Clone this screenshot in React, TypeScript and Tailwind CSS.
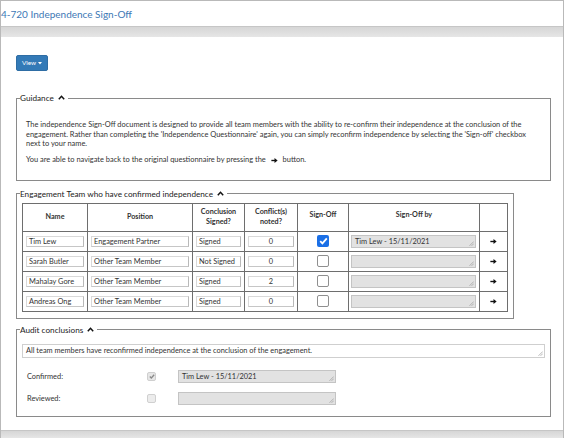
import React from 'react';

type Member = {
  name: string;
  position: string;
  signed: string;
  conflicts: string;
  signedOff: boolean;
  signOffBy: string;
};

const members: Member[] = [
  { name: 'Tim Lew', position: 'Engagement Partner', signed: 'Signed', conflicts: '0', signedOff: true, signOffBy: 'Tim Lew - 15/11/2021' },
  { name: 'Sarah Butler', position: 'Other Team Member', signed: 'Not Signed', conflicts: '0', signedOff: false, signOffBy: '' },
  { name: 'Mahalay Gore', position: 'Other Team Member', signed: 'Signed', conflicts: '2', signedOff: false, signOffBy: '' },
  { name: 'Andreas Ong', position: 'Other Team Member', signed: 'Signed', conflicts: '0', signedOff: false, signOffBy: '' },
];

const ChevronUp = () => (
  <svg width="7" height="5" viewBox="0 0 7 5" className="inline-block ml-[4px] align-[1px]">
    <polyline points="0.8,4.2 3.5,1.3 6.2,4.2" fill="none" stroke="#111" strokeWidth="1.5" />
  </svg>
);

const ArrowRight = () => (
  <svg width="7" height="5" viewBox="0 0 10 8" className="inline-block">
    <rect x="0" y="2.9" width="6" height="2.2" fill="#111" />
    <polygon points="5,0 10,4 5,8" fill="#111" />
  </svg>
);

// little resize grip drawn in the bottom-right corner of the textarea-like fields
const Grip = () => (
  <svg width="5" height="5" viewBox="0 0 5 5" className="absolute right-[1px] bottom-[1px]">
    <line x1="0.5" y1="4.8" x2="4.8" y2="0.5" stroke="#9a9a9a" strokeWidth="0.7" />
    <line x1="2.6" y1="4.8" x2="4.8" y2="2.6" stroke="#9a9a9a" strokeWidth="0.7" />
  </svg>
);

const Field: React.FC<{ value?: string; className?: string; grey?: boolean }> = ({ value, className = '', grey }) => (
  <div
    className={`relative flex items-center pl-[3px] text-[7.4px] text-[#333] border ${
      grey ? 'bg-[#e2e2e2] border-[#c4c4c4]' : 'bg-white border-[#cfcfcf]'
    } ${className}`}
  >
    {value}
    <Grip />
  </div>
);

const Cell: React.FC<{ value: string; center?: boolean }> = ({ value, center }) => (
  <div
    className={`h-[11px] mx-[3px] flex items-center px-[2px] bg-white border border-[#d9d9d9] border-r-[#b9b9b9] border-b-[#c6c6c6] text-[7.4px] text-[#333] whitespace-nowrap overflow-hidden ${
      center ? 'justify-center' : ''
    }`}
  >
    {value}
  </div>
);

const Check: React.FC<{ checked: boolean }> = ({ checked }) =>
  checked ? (
    <span className="w-[12px] h-[12px] rounded-[2px] bg-[#1a6fe6] flex items-center justify-center">
      <svg width="9" height="8" viewBox="0 0 9 8">
        <polyline points="1.2,4.2 3.4,6.4 7.8,1.3" fill="none" stroke="#fff" strokeWidth="1.8" />
      </svg>
    </span>
  ) : (
    <span className="w-[12px] h-[12px] rounded-[2px] bg-white border border-[#8f8f8f]" />
  );

const Legend: React.FC<{ children: React.ReactNode }> = ({ children }) => (
  <legend className="ml-[3px] pr-[3px] text-[8.2px] leading-[10px] text-[#222]">
    {children}
    <ChevronUp />
  </legend>
);

const App: React.FC = () => {
  return (
    <div className="w-[565px] h-[438px] bg-white overflow-hidden font-['Lato',sans-serif]">
      <div className="w-[564px] h-full flex flex-col border-l border-r border-t border-[#b9b9b9]">
        {/* Title */}
        <div className="h-[25px] flex items-center">
          <h1 className="text-[10px] text-[#3d78b5] leading-none">4-720 Independence Sign-Off</h1>
        </div>
        <div className="h-[11px] border-t border-[#c6c6c6] bg-gradient-to-b from-[#d6d6d6] to-[#e6e6e6]" />

        {/* Body */}
        <div className="flex-1 pl-[15px] pt-[18px]">
          <button className="w-[32px] h-[16px] rounded-[2px] bg-[#337ab7] border border-[#2e6da4] text-white text-[6.4px] flex items-center justify-center gap-[2px]">
            View
            <svg width="4" height="3" viewBox="0 0 4 3">
              <polygon points="0,0 4,0 2,2.5" fill="#fff" />
            </svg>
          </button>

          {/* Guidance */}
          <fieldset className="mt-[22px] w-[535px] border border-[#8a8a8a]">
            <Legend>Guidance</Legend>
            <div className="px-[9px] pt-[17px] pb-[15px] text-[7.45px] leading-[9.7px] text-[#333]">
              <p className="mb-[6px]">
                The independence Sign-Off document is designed to provide all team members with the ability to re-confirm their independence at the conclusion of the engagement. Rather than completing the 'Independence Questionnaire' again, you can simply reconfirm independence by selecting the 'Sign-off' checkbox next to your name.
              </p>
              <p>
                You are able to navigate back to the original questionnaire by pressing the{' '}
                <span className="mx-[3px]">
                  <ArrowRight />
                </span>{' '}
                button.
              </p>
            </div>
          </fieldset>

          {/* Engagement team */}
          <fieldset className="mt-[8px] w-[496px] border border-[#8a8a8a]">
            <Legend>Engagement Team who have confirmed independence</Legend>
            <div className="pt-[4px] px-[5px] pb-[6px]">
              <table className="w-[485px] table-fixed border-collapse border border-[#6e6e6e] text-[#333]">
                <colgroup>
                  <col className="w-[65px]" />
                  <col className="w-[105px]" />
                  <col className="w-[52px]" />
                  <col className="w-[53px]" />
                  <col className="w-[51px]" />
                  <col className="w-[131px]" />
                  <col className="w-[28px]" />
                </colgroup>
                <thead>
                  <tr className="h-[28px] text-[7.2px] leading-[10px] font-bold">
                    <th className="border border-[#6e6e6e]">Name</th>
                    <th className="border border-[#6e6e6e]">Position</th>
                    <th className="border border-[#6e6e6e]">
                      Conclusion
                      <br />
                      Signed?
                    </th>
                    <th className="border border-[#6e6e6e]">
                      Conflict(s)
                      <br />
                      noted?
                    </th>
                    <th className="border border-[#6e6e6e] align-top pt-[6px]">Sign-Off</th>
                    <th className="border border-[#6e6e6e] align-top pt-[6px]">Sign-Off by</th>
                    <th className="border border-[#6e6e6e] border-l-[#222]" />
                  </tr>
                </thead>
                <tbody>
                  {members.map((m) => (
                    <tr key={m.name} className="h-[20px]">
                      <td className="border border-[#6e6e6e] p-0">
                        <Cell value={m.name} />
                      </td>
                      <td className="border border-[#6e6e6e] p-0">
                        <Cell value={m.position} />
                      </td>
                      <td className="border border-[#6e6e6e] p-0">
                        <Cell value={m.signed} />
                      </td>
                      <td className="border border-[#6e6e6e] p-0">
                        <Cell value={m.conflicts} center />
                      </td>
                      <td className="border border-[#6e6e6e] p-0">
                        <div className="flex justify-center">
                          <Check checked={m.signedOff} />
                        </div>
                      </td>
                      <td className="border border-[#6e6e6e] p-0 pl-[2px] pr-[3px]">
                        <Field value={m.signOffBy} grey className="h-[13px]" />
                      </td>
                      <td className="border border-[#6e6e6e] border-l-[#222] p-0">
                        <div className="flex justify-center">
                          <ArrowRight />
                        </div>
                      </td>
                    </tr>
                  ))}
                </tbody>
              </table>
            </div>
          </fieldset>

          {/* Audit conclusions */}
          <fieldset className="mt-[6px] w-[535px] border border-[#8a8a8a]">
            <Legend>Audit conclusions</Legend>
            <div className="pt-[9px] px-[5px] pb-[11px]">
              <Field value="All team members have reconfirmed independence at the conclusion of the engagement." className="h-[14px]" />
              <div className="mt-[12px] pl-[5px] flex flex-col gap-[9px] text-[7.4px] text-[#333]">
                <div className="flex items-center">
                  <span className="w-[120px]">Confirmed:</span>
                  <span className="w-[9px] h-[9px] rounded-[2px] bg-[#e6e6e6] border border-[#cfcfcf] flex items-center justify-center">
                    <svg width="6" height="5" viewBox="0 0 6 5">
                      <polyline points="0.8,2.6 2.3,4 5.2,0.8" fill="none" stroke="#8a8a8a" strokeWidth="1.3" />
                    </svg>
                  </span>
                  <Field value="Tim Lew - 15/11/2021" grey className="ml-[22px] w-[158px] h-[13px]" />
                </div>
                <div className="flex items-center">
                  <span className="w-[120px]">Reviewed:</span>
                  <span className="w-[9px] h-[9px] rounded-[2px] bg-[#ececec] border border-[#d0d0d0]" />
                  <Field grey className="ml-[22px] w-[158px] h-[13px]" />
                </div>
              </div>
            </div>
          </fieldset>
        </div>

        <div className="h-[8px] border-t border-[#c6c6c6] bg-gradient-to-b from-[#d6d6d6] to-[#e6e6e6]" />
      </div>
    </div>
  );
};

export default App;
